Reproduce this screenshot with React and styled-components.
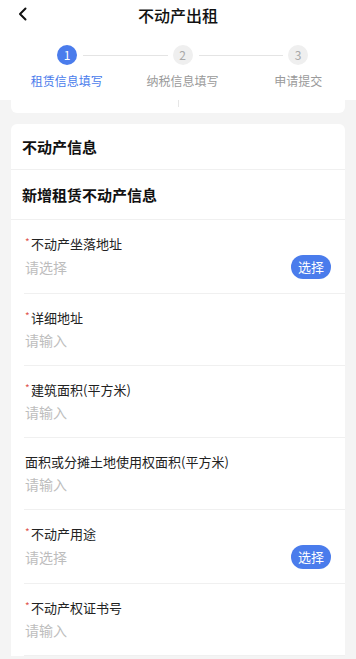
import styled, { createGlobalStyle } from "styled-components";

const GlobalStyle = createGlobalStyle`
  * { box-sizing: border-box; }
  body {
    margin: 0;
    background: #f4f4f4;
    font-family: "Noto Sans CJK SC", "Noto Sans", sans-serif;
    color: #222;
  }
`;

const Page = styled.div`
  width: 356px;
  height: 659px;
  overflow: hidden;
  background: #f4f4f4;
`;

const Top = styled.div`
  background: #fff;
  height: 100px;
`;

const Header = styled.div`
  height: 30px;
  display: flex;
  align-items: center;
  justify-content: center;
  position: relative;
`;

const Back = styled.div`
  position: absolute;
  left: 16px;
  top: 6px;
  width: 12px;
  height: 16px;
  display: flex;
  align-items: center;
  justify-content: center;
`;

const Title = styled.h1`
  margin: 0;
  font-size: 16px;
  font-weight: 500;
  color: #111;
  line-height: 28px;
`;

const StepTrack = styled.div`
  display: flex;
  align-items: center;
  padding: 15px 48px 0 57px;
`;

const Dot = styled.div`
  width: 20px;
  height: 20px;
  border-radius: 50%;
  flex: none;
  display: flex;
  align-items: center;
  justify-content: center;
  font-size: 12px;
  line-height: 1;
  background: ${(p) => (p.$active ? "#4a7cec" : "#efefef")};
  color: ${(p) => (p.$active ? "#fff" : "#a8a8a8")};
`;

const Line = styled.div`
  flex: 1;
  height: 1px;
  background: #e4e4e4;
  margin: 0 5px 0 6px;
`;

const StepLabels = styled.div`
  display: grid;
  grid-template-columns: repeat(3, 1fr);
  padding-left: 9px;
  margin-top: 7px;
`;

const StepLabel = styled.div`
  text-align: center;
  font-size: 12px;
  line-height: 17px;
  color: ${(p) => (p.$active ? "#4a7cec" : "#9a9a9a")};
`;

const Body = styled.div`
  padding: 0 11px;
`;

const PrevCard = styled.div`
  background: #fff;
  height: 13px;
  border-radius: 0 0 6px 6px;
  display: flex;
  justify-content: center;
`;

const Tick = styled.div`
  width: 1px;
  height: 7px;
  background: #e6e6e6;
`;

const Card = styled.div`
  margin-top: 11px;
  background: #fff;
  border-radius: 6px 6px 0 0;
`;

const SectionTitle = styled.div`
  font-size: 15px;
  font-weight: 700;
  color: #111;
  height: ${(p) => p.$h}px;
  display: flex;
  align-items: center;
  padding-left: 11px;
  border-bottom: 1px solid #f0f0f0;
`;

const Field = styled.div`
  margin-left: 13px;
  padding: 14px 14px 14px 1px;
  border-bottom: 1px solid #f0f0f0;
`;

const Label = styled.div`
  font-size: 13px;
  line-height: 20px;
  color: #222;
  display: flex;
  align-items: center;
`;

const Star = styled.span`
  color: #e0564e;
  font-size: 10px;
  width: 6px;
  margin-top: -4px;
`;

const ValueRow = styled.div`
  display: flex;
  align-items: center;
  justify-content: space-between;
  margin-top: 1px;
  min-height: 22px;
`;

const Placeholder = styled.div`
  font-size: 14px;
  line-height: 22px;
  color: #bdbdbd;
`;

const PickButton = styled.button`
  border: none;
  height: 24px;
  padding: 0 7px;
  border-radius: 12px;
  background: #4a7cec;
  color: #fff;
  font-family: inherit;
  font-size: 13px;
  line-height: 24px;
`;

const fields = [
  { label: "不动产坐落地址", required: true, select: true },
  { label: "详细地址", required: true },
  { label: "建筑面积(平方米)", required: true },
  { label: "面积或分摊土地使用权面积(平方米)" },
  { label: "不动产用途", required: true, select: true },
  { label: "不动产权证书号", required: true },
];

const steps = ["租赁信息填写", "纳税信息填写", "申请提交"];

export default function App() {
  return (
    <Page>
      <GlobalStyle />
      <Top>
        <Header>
          <Back>
            <svg width="9" height="14" viewBox="0 0 9 14">
              <path d="M7.5 1.5 L2 7 L7.5 12.5" fill="none" stroke="#111" strokeWidth="2" strokeLinecap="round" strokeLinejoin="round" />
            </svg>
          </Back>
          <Title>不动产出租</Title>
        </Header>
        <StepTrack>
          <Dot $active>1</Dot>
          <Line />
          <Dot>2</Dot>
          <Line />
          <Dot>3</Dot>
        </StepTrack>
        <StepLabels>
          {steps.map((s, i) => (
            <StepLabel key={s} $active={i === 0}>{s}</StepLabel>
          ))}
        </StepLabels>
      </Top>
      <Body>
        <PrevCard>
          <Tick />
        </PrevCard>
        <Card>
          <SectionTitle $h={46}>不动产信息</SectionTitle>
          <SectionTitle $h={50}>新增租赁不动产信息</SectionTitle>
          {fields.map((f) => (
            <Field key={f.label}>
              <Label>
                {f.required && <Star>*</Star>}
                {f.label}
              </Label>
              <ValueRow>
                <Placeholder>{f.select ? "请选择" : "请输入"}</Placeholder>
                {f.select && <PickButton>选择</PickButton>}
              </ValueRow>
            </Field>
          ))}
        </Card>
      </Body>
    </Page>
  );
}
